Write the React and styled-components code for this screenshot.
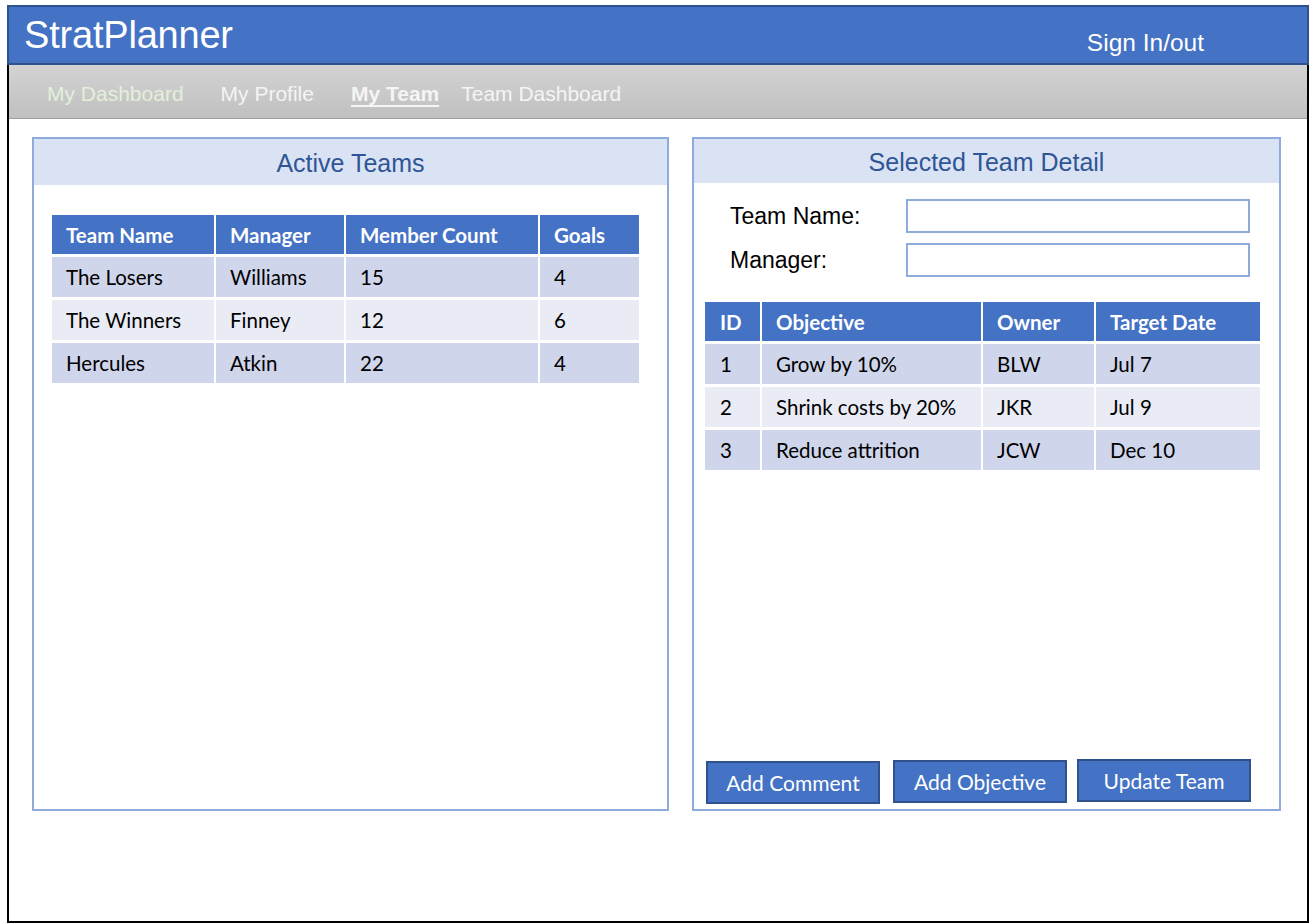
import styled, { createGlobalStyle } from 'styled-components';

const GlobalStyle = createGlobalStyle`
  html, body {
    margin: 0;
    padding: 0;
    background: #ffffff;
  }
  body {
    font-family: "Liberation Sans", Arial, sans-serif;
  }
`;

const Frame = styled.div`
  margin: 5px 0 0 7px;
  width: 1302px;
  height: 918px;
  display: flex;
  flex-direction: column;
  box-sizing: border-box;
`;

const Header = styled.header`
  height: 60px;
  box-sizing: border-box;
  background: #4472c4;
  border: 2px solid #2f528f;
  display: flex;
  align-items: center;
  justify-content: space-between;
  padding: 0 103px 0 15px;
  color: #ffffff;
`;

const Logo = styled.div`
  font-size: 38px;
  letter-spacing: -0.2px;
`;

const SignIn = styled.div`
  font-size: 24.5px;
  margin-top: 16px;
`;

const Body = styled.div`
  flex: 1;
  display: flex;
  flex-direction: column;
  border: 2px solid #000000;
  border-top: none;
`;

const Nav = styled.nav`
  height: 54px;
  box-sizing: border-box;
  background: linear-gradient(to bottom, #d3d3d3, #c0c0c0);
  border-bottom: 1px solid #9c9c9c;
  display: flex;
  align-items: center;
  padding: 5px 0 0 38px;
`;

const NavItem = styled.a`
  font-size: 21px;
  color: ${p => p.$tone || '#f5f5f5'};
  font-weight: ${p => (p.$active ? 700 : 400)};
  text-decoration: ${p => (p.$active ? 'underline' : 'none')};
  text-underline-offset: 4px;
  margin-right: ${p => p.$space || 0}px;
`;

const Content = styled.main`
  display: flex;
  gap: 23px;
  padding: 18px 0 0 23px;
`;

const Panel = styled.section`
  width: ${p => p.$width}px;
  height: 674px;
  box-sizing: border-box;
  border: 2px solid #8faadc;
  display: flex;
  flex-direction: column;
`;

const PanelTitle = styled.h2`
  margin: 0;
  height: ${p => p.$height}px;
  background: #dae3f3;
  color: #2f5597;
  font-size: 25px;
  font-weight: 400;
  display: flex;
  align-items: center;
  justify-content: center;
  padding-top: ${p => p.$nudge || 2}px;
  box-sizing: border-box;
`;

const Table = styled.table`
  table-layout: fixed;
  width: ${p => p.$width}px;
  border-collapse: separate;
  border-spacing: 2px 3px;
  font-family: Lato, "Open Sans", sans-serif;
  font-size: 20.5px;
  margin: ${p => p.$margin};
`;

const Th = styled.th`
  background: #4472c4;
  color: #ffffff;
  font-weight: 700;
  text-align: left;
  height: 39px;
  padding: 0 0 0 ${p => p.$pad || 14}px;
  box-sizing: border-box;
  white-space: nowrap;
`;

const Td = styled.td`
  background: ${p => (p.$odd ? '#cfd5ea' : '#e9ebf5')};
  color: #000000;
  height: 40px;
  padding: 0 0 0 ${p => p.$pad || 14}px;
  box-sizing: border-box;
  white-space: nowrap;
`;

const FormGrid = styled.div`
  display: grid;
  grid-template-columns: 176px 344px;
  row-gap: 10px;
  padding: 16px 0 0 36px;
  align-items: center;
`;

const Label = styled.label`
  font-size: 23px;
  color: #000000;
`;

const Input = styled.input`
  height: 34px;
  box-sizing: border-box;
  border: 2px solid #8faadc;
  outline: none;
  background: #ffffff;
`;

const Spacer = styled.div`
  flex: 1;
`;

const Actions = styled.div`
  display: flex;
  align-items: flex-end;
  padding: 0 0 5px 12px;
`;

const Button = styled.button`
  width: 174px;
  height: 43px;
  box-sizing: border-box;
  background: #4472c4;
  border: 2px solid #2f528f;
  color: #ffffff;
  font-family: Lato, "Open Sans", sans-serif;
  font-size: 21px;
  margin-left: ${p => p.$gap || 0}px;
  margin-bottom: ${p => p.$lift || 0}px;
  padding: 0;
`;

const teams = [
  ['The Losers', 'Williams', '15', '4'],
  ['The Winners', 'Finney', '12', '6'],
  ['Hercules', 'Atkin', '22', '4'],
];

const objectives = [
  ['1', 'Grow by 10%', 'BLW', 'Jul 7'],
  ['2', 'Shrink costs by 20%', 'JKR', 'Jul 9'],
  ['3', 'Reduce attrition', 'JCW', 'Dec 10'],
];

function DataTable({ columns, widths, rows, margin, firstPad }) {
  const total = widths.reduce((a, b) => a + b, 0) + (widths.length + 1) * 2;
  return (
    <Table $margin={margin} $width={total}>
      <colgroup>
        {widths.map((w, i) => (
          <col key={i} style={{ width: w }} />
        ))}
      </colgroup>
      <thead>
        <tr>
          {columns.map((c, i) => (
            <Th key={c} $pad={i === 0 ? firstPad : undefined}>{c}</Th>
          ))}
        </tr>
      </thead>
      <tbody>
        {rows.map((r, ri) => (
          <tr key={ri}>
            {r.map((cell, ci) => (
              <Td key={ci} $odd={ri % 2 === 0} $pad={ci === 0 ? firstPad : undefined}>{cell}</Td>
            ))}
          </tr>
        ))}
      </tbody>
    </Table>
  );
}

export default function App() {
  return (
    <>
      <GlobalStyle />
      <Frame>
        <Header>
          <Logo>StratPlanner</Logo>
          <SignIn>Sign In/out</SignIn>
        </Header>
        <Body>
          <Nav>
            <NavItem $tone="#e2f0d9" $space={37}>My Dashboard</NavItem>
            <NavItem $space={37}>My Profile</NavItem>
            <NavItem $active $space={22}>My Team</NavItem>
            <NavItem>Team Dashboard</NavItem>
          </Nav>
          <Content>
            <Panel $width={637}>
              <PanelTitle $height={46} $nudge={3}>Active Teams</PanelTitle>
              <DataTable
                columns={['Team Name', 'Manager', 'Member Count', 'Goals']}
                widths={[162, 128, 192, 99]}
                rows={teams}
                margin="27px 0 0 16px"
              />
            </Panel>
            <Panel $width={589}>
              <PanelTitle $height={44}>Selected Team Detail</PanelTitle>
              <FormGrid>
                <Label>Team Name:</Label>
                <Input />
                <Label>Manager:</Label>
                <Input />
              </FormGrid>
              <DataTable
                columns={['ID', 'Objective', 'Owner', 'Target Date']}
                widths={[55, 219, 111, 164]}
                rows={objectives}
                margin="22px 0 0 9px"
                firstPad={15}
              />
              <Spacer />
              <Actions>
                <Button>Add Comment</Button>
                <Button $gap={13} $lift={1}>Add Objective</Button>
                <Button $gap={10} $lift={2}>Update Team</Button>
              </Actions>
            </Panel>
          </Content>
        </Body>
      </Frame>
    </>
  );
}
